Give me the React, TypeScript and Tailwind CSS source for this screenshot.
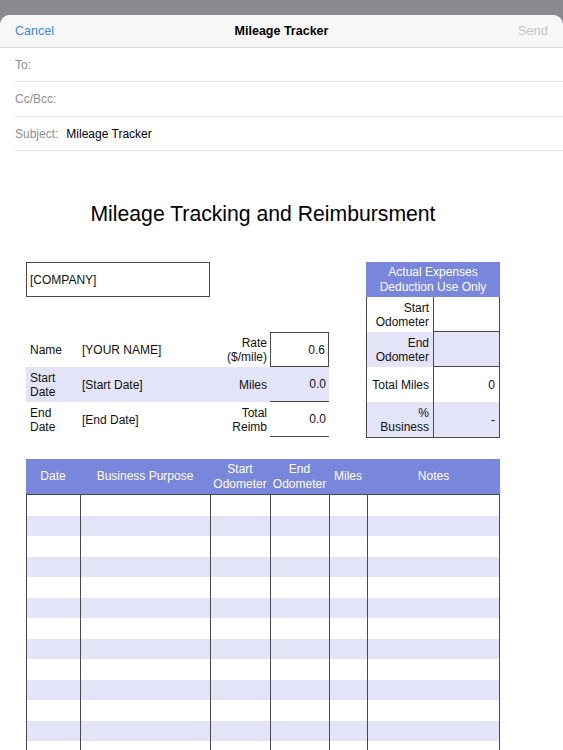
import React from 'react'

const cols = 'grid grid-cols-[54px_130px_60px_59px_38px_133px]'
const line = 'border-[#4a4a4a]'

function InfoRow({ a, b, c, d, shaded, box }: { a: React.ReactNode; b: string; c: React.ReactNode; d: string; shaded?: boolean; box?: 'full' | 'bottom' }) {
  const valueCls =
    box === 'full'
      ? `border ${line}`
      : `border-b ${line}`
  return (
    <div className={`grid grid-cols-[54px_130px_60px_59px] h-[35px] ${shaded ? 'bg-[#e4e4f8]' : ''}`}>
      <div className="flex items-center pl-[4px] leading-[14px]">{a}</div>
      <div className="flex items-center pl-[2px]">{b}</div>
      <div className="flex items-center justify-end pr-[3px] text-right leading-[14px]">{c}</div>
      <div className={`flex items-center justify-end pr-[3px] ${valueCls}`}>{d}</div>
    </div>
  )
}

function SideRow({ label, value, shaded, bordered }: { label: React.ReactNode; value?: string; shaded?: boolean; bordered?: boolean }) {
  return (
    <div className={`flex h-[35px] ${shaded ? 'bg-[#e4e4f8]' : ''}`}>
      <div className="w-[66px] flex items-center justify-end pr-[4px] text-right leading-[14px]">{label}</div>
      <div className={`flex-1 flex items-center justify-end pr-[4px] border-l ${line} ${bordered ? `border-b ${line}` : ''}`}>{value}</div>
    </div>
  )
}

export default function App() {
  const rows = Array.from({ length: 13 })
  return (
    <div className="w-full h-[750px] bg-[#8a8a8f] pt-[15px] overflow-hidden" style={{ fontFamily: '"Liberation Sans", Arial, sans-serif' }}>
      <div className="h-full bg-white rounded-t-[10px] overflow-hidden">
        {/* Mail header */}
        <div className="h-[33px] bg-[#f7f7f7] border-b border-[#d9d9d9] grid grid-cols-[1fr_auto_1fr] items-center px-[15px] text-[12.5px]">
          <span className="text-[#3d86e0]">Cancel</span>
          <span className="font-bold text-black">Mileage Tracker</span>
          <span className="text-right text-[13px] text-[#c4c4c8]">Send</span>
        </div>
        <div className="ml-[15px] text-[12px]">
          <div className="h-[34px] border-b border-[#e3e3e3] flex items-center text-[#8e8e93]">To:</div>
          <div className="h-[35px] border-b border-[#e3e3e3] flex items-center text-[#8e8e93]">Cc/Bcc:</div>
          <div className="h-[34px] border-b border-[#e3e3e3] flex items-center">
            <span className="text-[#8e8e93]">Subject:</span>
            <span className="ml-[8px] text-black">Mileage Tracker</span>
          </div>
        </div>

        {/* Document */}
        <div className="ml-[26px] w-[474px] text-[12px] text-[#111]">
          <h1 className="mt-[51px] text-center text-[21.2px] leading-[24px] text-black">Mileage Tracking and Reimbursment</h1>

          <div className="mt-[36px] flex">
            <div className="w-[303px]">
              <div className={`w-[184px] h-[35px] border ${line} flex items-center pl-[3px]`}>[COMPANY]</div>
              <div className="mt-[35px]">
                <InfoRow a="Name" b="[YOUR NAME]" c={<span>Rate<br />($/mile)</span>} d="0.6" box="full" />
                <InfoRow a={<span>Start<br />Date</span>} b="[Start Date]" c="Miles" d="0.0" shaded />
                <InfoRow a={<span>End<br />Date</span>} b="[End Date]" c={<span>Total<br />Reimb</span>} d="0.0" />
              </div>
            </div>

            <div className="ml-[37px] w-[134px]">
              <div className="h-[35px] bg-[#7886dc] text-white text-center flex items-center justify-center leading-[15px]">
                <span>Actual Expenses<br />Deduction Use Only</span>
              </div>
              <div className={`border-l border-r border-b ${line}`}>
                <SideRow label={<span>Start<br />Odometer</span>} bordered />
                <SideRow label={<span>End<br />Odometer</span>} shaded bordered />
                <SideRow label="Total Miles" value="0" />
                <SideRow label={<span>%<br />Business</span>} value="-" shaded />
              </div>
            </div>
          </div>

          {/* Log table */}
          <div className="mt-[21px]">
            <div className={`${cols} h-[36px] bg-[#7886dc] text-white border-b ${line} leading-[15px]`}>
              <div className="flex items-center justify-center">Date</div>
              <div className="flex items-center justify-center">Business Purpose</div>
              <div className="flex items-center justify-center text-center">Start<br />Odometer</div>
              <div className="flex items-center justify-center text-center">End<br />Odometer</div>
              <div className="flex items-center justify-center">Miles</div>
              <div className="flex items-center justify-center">Notes</div>
            </div>
            {rows.map((_, i) => (
              <div key={i} className={`${cols} h-[20.5px] ${i % 2 === 1 ? 'bg-[#e4e4f8]' : ''}`}>
                <div className={`border-l ${line}`} />
                <div className={`border-l ${line}`} />
                <div className={`border-l ${line}`} />
                <div className={`border-l ${line}`} />
                <div className={`border-l ${line}`} />
                <div className={`border-l border-r ${line}`} />
              </div>
            ))}
          </div>
        </div>
      </div>
    </div>
  )
}
